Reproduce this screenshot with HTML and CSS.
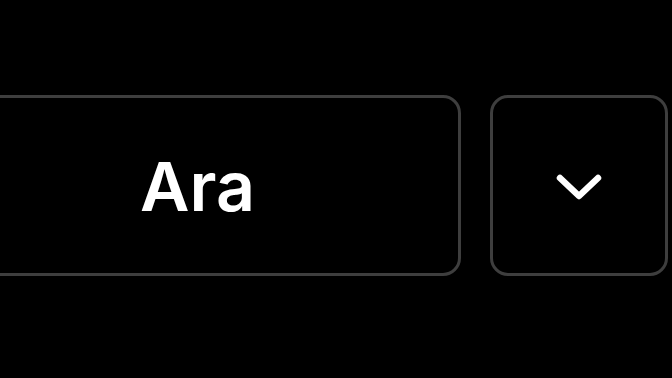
FILE: index.html
```html
<!DOCTYPE html>
<html lang="tr">
<head>
    <meta charset="UTF-8">
    <meta name="viewport" content="width=device-width, initial-scale=1.0">
    <title>Ara</title>
    <link rel="stylesheet" href="styles.css">
</head>
<body>
    <div class="search-bar">
        <button class="search-button">Ara</button>
        <button class="menu-button" aria-label="Daha fazla">
            <svg class="chevron" viewBox="0 0 48 30" width="48" height="30">
                <path d="M5 5 L24 23 L43 5" fill="none" stroke="#fff" stroke-width="6.5" stroke-linecap="round" stroke-linejoin="round"/>
            </svg>
        </button>
    </div>
</body>
</html>
```

FILE: styles.css
```css
body {
    margin: 0;
    height: 100vh;
    overflow: hidden;
    background-color: #000;
    font-family: Inter, "Noto Sans", sans-serif;
}

.search-bar {
    display: flex;
    gap: 29px;
    padding-top: 95px;
    margin-left: -66px;
}

.search-button, .menu-button {
    height: 181px;
    background: #000;
    border: 3px solid #3e3e3e;
    border-radius: 18px;
    color: #fff;
    padding: 0;
    display: flex;
    justify-content: center;
    align-items: center;
}

.search-button {
    width: 527px;
    font-size: 68px;
    font-weight: 600;
    font-family: Inter, "Noto Sans", sans-serif;
}

.menu-button {
    width: 178px;
}

.chevron {
    margin-top: 4px;
}
```
